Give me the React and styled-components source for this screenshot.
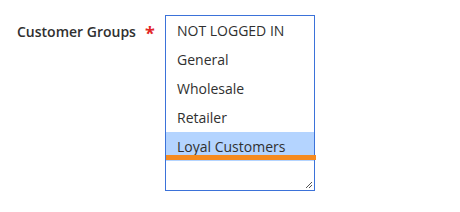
import React from "react";
import styled, { createGlobalStyle } from "styled-components";

const Global = createGlobalStyle`
  html, body { margin: 0; padding: 0; background: #fff; }
  body { font-family: "Open Sans", "Liberation Sans", sans-serif; }
`;

const Field = styled.div`
  display: flex;
  align-items: flex-start;
  padding: 15px 0 0 17px;
`;

const Label = styled.label`
  display: flex;
  align-items: center;
  width: 148px;
  height: 30px;
  padding-top: 2px;
  box-sizing: border-box;
  font-size: 14px;
  font-weight: 600;
  color: #303030;
`;

const Required = styled.span`
  color: #e22626;
  font-size: 18px;
  font-weight: 700;
  margin-left: 9px;
  line-height: 1;
  position: relative;
  top: 2px;
`;

const ListBox = styled.div`
  position: relative;
  width: 150px;
  height: 176px;
  box-sizing: border-box;
  border: 1px solid #3b72d9;
  background: #fff;
`;

const Option = styled.div`
  position: relative;
  height: 29px;
  display: flex;
  align-items: center;
  padding-left: 11px;
  font-size: 14px;
  color: #303030;
  background: ${(p) => (p.$selected ? "#b4d4ff" : "transparent")};
`;

const Underline = styled.span`
  position: absolute;
  left: 0;
  right: -2px;
  bottom: 1px;
  height: 5px;
  background: #f58a1f;
`;

const Grip = styled.svg`
  position: absolute;
  right: 1px;
  bottom: 1px;
  width: 8px;
  height: 8px;
`;

const groups = ["NOT LOGGED IN", "General", "Wholesale", "Retailer", "Loyal Customers"];

export default function App() {
  return (
    <>
      <Global />
      <Field>
        <Label>
          Customer Groups<Required>*</Required>
        </Label>
        <ListBox>
          {groups.map((g, i) => (
            <Option key={g} $selected={i === 4}>
              {g}
              {i === 4 && <Underline />}
            </Option>
          ))}
          <Grip viewBox="0 0 8 8">
            <path d="M7 1 L1 7 M7 4 L4 7" stroke="#555" strokeWidth="1" />
          </Grip>
        </ListBox>
      </Field>
    </>
  );
}
